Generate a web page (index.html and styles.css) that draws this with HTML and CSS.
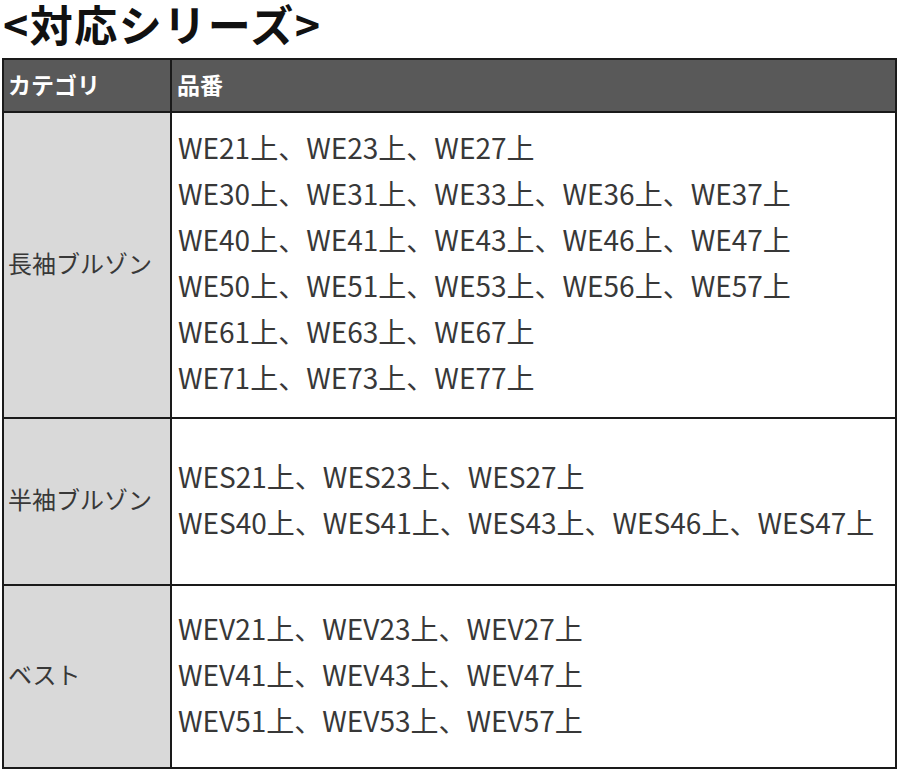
FILE: index.html
```html
<!DOCTYPE html>
<html lang="ja">
<head>
<meta charset="utf-8">
<link rel="stylesheet" href="styles.css">
</head>
<body>
<h1 class="title">&lt;対応シリーズ&gt;</h1>
<table class="series">
  <thead>
    <tr><th class="cat">カテゴリ</th><th class="num">品番</th></tr>
  </thead>
  <tbody>
    <tr class="r1">
      <td class="cat">長袖ブルゾン</td>
      <td class="num">
        <div>WE21上、WE23上、WE27上</div>
        <div>WE30上、WE31上、WE33上、WE36上、WE37上</div>
        <div>WE40上、WE41上、WE43上、WE46上、WE47上</div>
        <div>WE50上、WE51上、WE53上、WE56上、WE57上</div>
        <div>WE61上、WE63上、WE67上</div>
        <div>WE71上、WE73上、WE77上</div>
      </td>
    </tr>
    <tr class="r2">
      <td class="cat">半袖ブルゾン</td>
      <td class="num">
        <div>WES21上、WES23上、WES27上</div>
        <div>WES40上、WES41上、WES43上、WES46上、WES47上</div>
      </td>
    </tr>
    <tr class="r3">
      <td class="cat">ベスト</td>
      <td class="num">
        <div>WEV21上、WEV23上、WEV27上</div>
        <div>WEV41上、WEV43上、WEV47上</div>
        <div>WEV51上、WEV53上、WEV57上</div>
      </td>
    </tr>
  </tbody>
</table>
</body>
</html>
```

FILE: styles.css
```css
html, body {
  margin: 0;
  padding: 0;
  background: #ffffff;
}
body {
  font-family: "Noto Sans CJK JP", "Noto Sans", sans-serif;
  color: #383838;
}
.title {
  margin: 0 0 0 3px;
  padding-top: 1px;
  height: 57px;
  font-size: 43px;
  line-height: 44px;
  letter-spacing: 1.5px;
  font-weight: 700;
  color: #111111;
}
.series {
  margin-left: 2px;
  width: 895px;
  border-collapse: collapse;
  border: 2px solid #1a1a1a;
}
.series th, .series td {
  border: 2px solid #1a1a1a;
  padding: 0 5px 6px;
  text-align: left;
  vertical-align: middle;
}
.series thead th {
  background: #595959;
  color: #ffffff;
  font-size: 23px;
  font-weight: 700;
  height: 47px;
  padding-bottom: 4px;
}
.series th.cat, .series td.cat {
  width: 158px;
  padding-left: 4px;
  padding-right: 4px;
}
.series td.cat {
  background: #d9d9d9;
  font-size: 24px;
}
.series td.num {
  font-size: 28px;
  line-height: 46px;
  padding-left: 6px;
}
.r1 td { height: 298px; }
.r2 td { height: 159px; }
.r3 td { height: 175px; }
```
